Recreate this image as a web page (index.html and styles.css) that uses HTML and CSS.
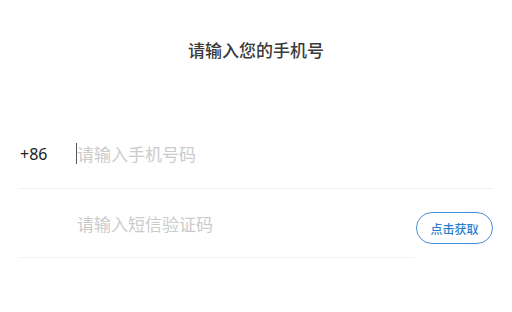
FILE: index.html
```html
<!DOCTYPE html>
<html lang="zh-CN">
<head>
<meta charset="utf-8">
<link rel="stylesheet" href="styles.css">
</head>
<body>
<div class="page">
  <h1 class="title">请输入您的手机号</h1>
  <div class="form">
    <div class="row">
      <span class="prefix">+86</span>
      <span class="caret"></span>
      <span class="placeholder">请输入手机号码</span>
    </div>
    <div class="row row-code">
      <div class="field">
        <span class="placeholder">请输入短信验证码</span>
      </div>
      <button class="code-btn">点击获取</button>
    </div>
  </div>
</div>
</body>
</html>
```
FILE: styles.css
```css
html, body {
  margin: 0;
  padding: 0;
  background: #fff;
}
body {
  font-family: "Noto Sans CJK SC", "Noto Sans", sans-serif;
  color: #333;
}
.page {
  width: 512px;
  height: 312px;
}
.title {
  margin: 0;
  padding-top: 38px;
  font-size: 17px;
  line-height: 24px;
  font-weight: 500;
  text-align: center;
  color: #3a3a3a;
}
.form {
  margin-top: 57px;
  padding: 0 19px 0 18px;
}
.row {
  display: flex;
  align-items: center;
  height: 69px;
  border-bottom: 1px solid #f2f2f2;
}
.prefix {
  width: 58px;
  padding-left: 2px;
  box-sizing: border-box;
  font-family: "Noto Sans", sans-serif;
  font-size: 16px;
  color: #222;
}
.caret {
  width: 1px;
  height: 21px;
  background: #555;
}
.placeholder {
  font-size: 17px;
  color: #cbcbcb;
}
.row-code {
  border-bottom: none;
  align-items: stretch;
}
.field {
  flex: 1;
  display: flex;
  align-items: center;
  padding-left: 59px;
  border-bottom: 1px solid #f2f2f2;
}
.code-btn {
  align-self: flex-start;
  margin-top: 23px;
  margin-left: 1px;
  width: 77px;
  height: 32px;
  border: 1px solid #4a90d9;
  border-radius: 16px;
  background: #fff;
  color: #2b7fd0;
  font-family: "Noto Sans CJK SC", sans-serif;
  font-size: 12px;
  font-weight: 500;
  padding: 0;
}
```
